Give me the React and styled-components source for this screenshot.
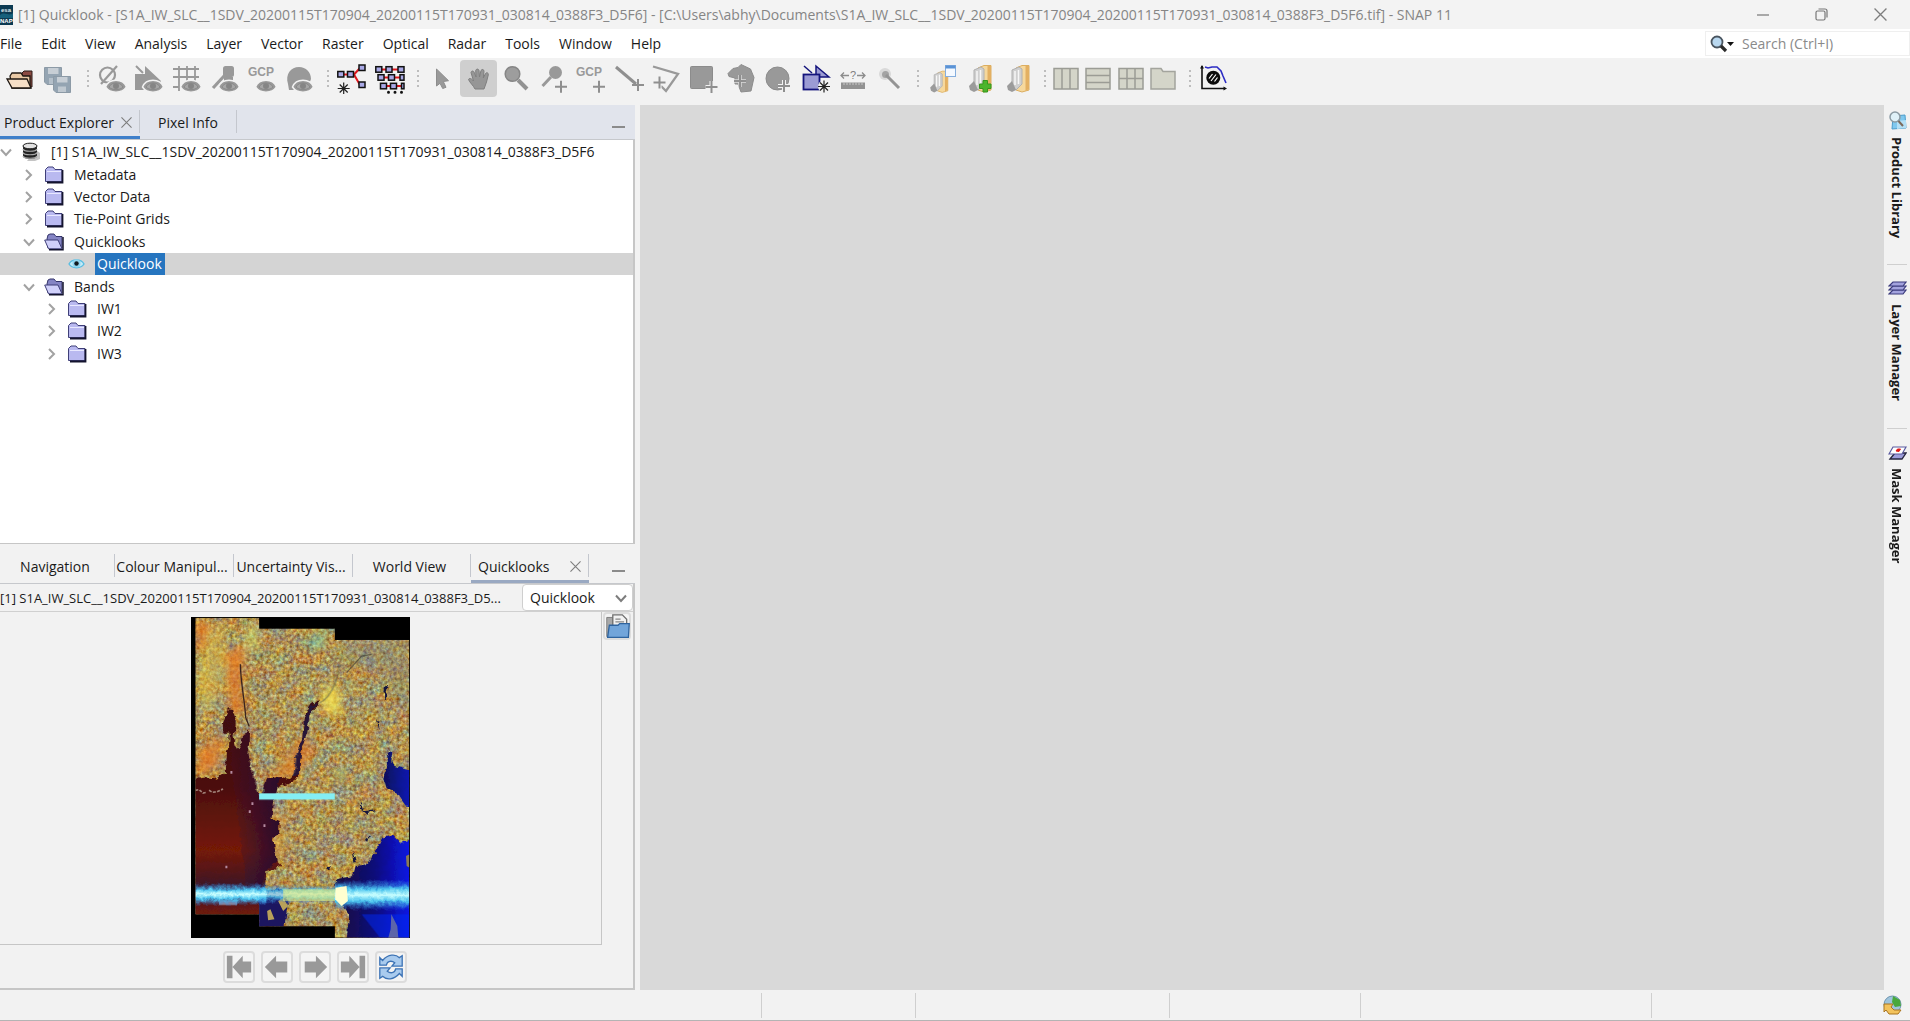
import { useState } from 'react';
import styled, { createGlobalStyle } from 'styled-components';

const GlobalStyle = createGlobalStyle`
  * { box-sizing: border-box; }
  body {
    margin: 0;
    background: #f2f2f2;
    overflow: hidden;
  }
  body, button, input, select {
    font-family: 'Open Sans', 'Noto Sans', sans-serif;
    font-size: 14px;
    color: #1a1a1a;
  }
  button {
    padding: 0;
    border: none;
    background: none;
  }
  svg { display: block; flex: none; }
`;

const Window = styled.div`
  display: flex;
  flex-direction: column;
  height: 100vh;
  border-bottom: 1px solid #b4b4b4;
`;

/* ---- title bar and menu ---- */

const TitleBar = styled.header`
  display: flex;
  align-items: center;
  height: 29px;
  flex: none;
  background: #f3f3f3;
`;

const Title = styled.h1`
  flex: 1;
  margin: 0 0 0 5px;
  font-size: 14px;
  font-weight: 400;
  color: #858585;
  white-space: nowrap;
`;

const WindowButton = styled.button`
  display: grid;
  place-items: center;
  width: 59px;
  height: 29px;
`;

const MenuBar = styled.nav`
  display: flex;
  align-items: center;
  height: 29px;
  flex: none;
  background: #fff;
`;

const MenuItem = styled.button`
  margin-left: ${props => (props.$first ? '0' : '19px')};
  white-space: nowrap;
`;

const SearchBox = styled.label`
  display: flex;
  align-items: center;
  width: 205px;
  height: 25px;
  margin-left: auto;
  padding-left: 4px;
  gap: 8px;
  border: 1px solid #efefef;
`;

const SearchInput = styled.input`
  flex: 1;
  min-width: 0;
  border: none;
  outline: none;
  background: none;
  padding: 0;
  &::placeholder { color: #8a8a8a; opacity: 1; }
`;

/* ---- tool bar ---- */

const ToolBar = styled.div`
  display: flex;
  align-items: flex-start;
  height: 47px;
  flex: none;
  padding: 2px 0 0 1px;
`;

const ToolGroup = styled.div`
  display: flex;
  justify-content: space-between;
  width: ${props => props.$width}px;
`;

const ToolButton = styled.button`
  display: grid;
  place-items: center;
  width: ${props => (props.$narrow ? '32px' : '37px')};
  height: 37px;
  border-radius: 4px;
  background: ${props => (props.$active ? '#cfcfcf' : 'transparent')};
`;

const Grip = styled.span`
  width: 2px;
  height: 19px;
  margin: 10px 4px 0 ${props => props.$lead || 8}px;
  background: repeating-linear-gradient(#bdbdbd 0 2px, transparent 2px 5px);
`;

/* ---- main area ---- */

const Main = styled.main`
  display: flex;
  flex: 1;
  min-height: 0;
`;

const Side = styled.aside`
  display: flex;
  flex-direction: column;
  width: 33.25%;
  min-width: 620px;
`;

const Canvas = styled.section`
  flex: 1;
  margin-left: 5px;
  background: #d9d9d9;
`;

const Panel = styled.section`
  display: flex;
  flex-direction: column;
  flex: ${props => (props.$grow ? '1' : 'none')};
  min-height: 0;
  margin-top: ${props => (props.$grow ? '0' : '5px')};
`;

const TabStrip = styled.div`
  display: flex;
  align-items: flex-start;
  height: 35px;
  flex: none;
  background: ${props => (props.$focused ? '#e1e4ec' : '#f2f2f2')};
  border-bottom: 1px solid #c6c8cc;
`;

const Tab = styled.div`
  display: flex;
  align-items: center;
  justify-content: ${props => (props.$inset ? 'space-between' : 'center')};
  width: ${props => props.$width}px;
  height: 34px;
  padding: ${props => (props.$inset ? `3px 7px 0 ${props.$inset}px` : '3px 5px 0 0')};
  border-bottom: 3px solid ${props => props.$line || 'transparent'};
  background: linear-gradient(#c4c7ce, #c4c7ce) right 5px / 1px 23px no-repeat;
`;

const TabLabel = styled.button`
  white-space: nowrap;
`;

const IconButton = styled.button`
  display: grid;
  place-items: center;
  width: 13px;
  height: 20px;
`;

const Minimise = styled.button`
  width: 13px;
  height: 2px;
  margin: 21px 10px 0 auto;
  background: #8b8b8b;
`;

const TreePane = styled.div`
  flex: 1;
  background: #fff;
  border: 1px solid #c6c6c6;
  border-width: 0 2px 1px 0;
`;

const Tree = styled.ul`
  display: grid;
  grid-auto-rows: 1fr;
  height: 225px;
  margin: 0;
  padding: 1px 0 0;
  list-style: none;
`;

const TreeRow = styled.li`
  display: flex;
  align-items: center;
  padding-left: ${props => props.$depth * 23}px;
  background: ${props => (props.$selected ? '#d4d4d4' : 'transparent')};
  white-space: nowrap;
`;

const Expander = styled.button`
  width: 12px;
  height: 12px;
  margin-right: 9px;
`;

const TreeLabel = styled.span`
  margin-left: 8px;
  padding: 0 3px 0 2px;
  line-height: 22px;
  color: ${props => (props.$selected ? '#fff' : 'inherit')};
  background: ${props => (props.$selected ? '#2675bf' : 'transparent')};
`;

/* ---- quicklooks ---- */

const PanelBody = styled.div`
  border: 1px solid #c6c6c6;
  border-width: 0 2px 2px 0;
`;

const ProductRow = styled.div`
  display: flex;
  align-items: center;
  justify-content: space-between;
  height: 28px;
  border-bottom: 1px solid #d0d0d0;
`;

const ProductName = styled.span`
  font-size: 13px;
  white-space: nowrap;
`;

const SelectWrap = styled.label`
  display: grid;
  align-items: center;
  width: 111px;
  height: 27px;
  flex: none;

  select, svg { grid-area: 1 / 1; }
  svg { justify-self: end; margin-right: 6px; pointer-events: none; }
`;

const Select = styled.select`
  appearance: none;
  width: 100%;
  height: 100%;
  padding: 0 0 0 7px;
  border: 1px solid #cfcfcf;
  border-radius: 4px;
  background: #fff;
`;

const ViewerRow = styled.div`
  display: flex;
`;

const Viewer = styled.div`
  flex: 1;
  display: flex;
  justify-content: center;
  padding: 5px 0 6px;
  border: 1px solid #c6c6c6;
  border-width: 0 1px 1px 0;
`;

const ViewerTools = styled.div`
  width: 31px;
  padding: 0 1px;
`;

const FrameButton = styled.button`
  display: grid;
  place-items: center;
  width: ${props => props.$size}px;
  height: ${props => props.$size}px;
  border: 2px solid #dcdcdc;
  border-radius: 4px;
  background: #f4f4f4;
`;

const Pager = styled.div`
  display: flex;
  justify-content: center;
  gap: 6px;
  padding: 6px 4px 5px 0;
`;

/* ---- right rail and status ---- */

const Rail = styled.aside`
  display: flex;
  flex-direction: column;
  width: 26px;
  padding: 6px 3px 0;
`;

const RailTab = styled.button`
  display: flex;
  align-items: center;
  gap: 7px;
  height: ${props => props.$length}px;
  writing-mode: vertical-rl;
  font-size: 13px;
  font-weight: 700;
  white-space: nowrap;
`;

const RailLine = styled.hr`
  width: 20px;
  margin: 0 0 16px;
  border: none;
  border-top: 1px solid #cfcfcf;
`;

const StatusBar = styled.footer`
  display: flex;
  align-items: center;
  justify-content: flex-end;
  height: 30px;
  flex: none;
  padding-right: 8px;
`;

const StatusCell = styled.div`
  width: ${props => props.$width}px;
  height: 25px;
  border-left: 1px solid #cfcfcf;
`;

/* ---- drawings ---- */

const G = '#999';

const Svg = ({ size = 30, children, ...rest }) => (
  <svg width={size} height={size} viewBox="0 0 30 30" fill="none" aria-hidden="true" {...rest}>
    {children}
  </svg>
);

const Eye = ({ x = 19, y = 22 }) => (
  <g transform={`translate(${x} ${y})`}>
    <path d="M-10.5 1C-7-8 7-8 10.5 1C6 8-6 8-10.5 1Z" fill={G} stroke="#f2f2f2" strokeWidth="1.5" />
    <path d="M-7 1C-4-4.5 4-4.5 7 1C4 4.5-4 4.5-7 1Z" fill="#a6a6a6" stroke="#8a8a8a" />
    <circle cx="0" cy="0" r="3" fill="#858585" />
  </g>
);

const Plus = ({ x, y }) => (
  <g transform={`translate(${x} ${y})`}>
    <path d="M-6 0H6M0-6V6" stroke="#f2f2f2" strokeWidth="4" />
    <path d="M-6 0H6M0-6V6" stroke="#8f8f8f" strokeWidth="2" />
  </g>
);

const Spark = ({ x, y }) => (
  <path
    transform={`translate(${x} ${y})`}
    d="M0-6V6M-6 0H6M-4-4L4 4M4-4L-4 4"
    stroke="#222"
    strokeWidth="1.2"
  />
);

const GcpText = () => (
  <text x="0" y="12" fontFamily="Liberation Sans, sans-serif" fontSize="12" fontWeight="700" fill={G}>
    GCP
  </text>
);

const Box = ({ x, y, w = 6 }) => (
  <rect x={x} y={y} width={w} height="5.5" fill="#a9a9e6" stroke="#111" strokeWidth="1.5" />
);

const BookFolder = () => (
  <>
    <path d="M13 4L19 1.5H26V26L19 28L13 26Z" fill="#f6d89c" stroke="#dcae60" />
    <path d="M22.5 2V27L26 25V2Z" fill="#e3b062" />
    <path d="M9 6L16 3L19 5V20L13 26L9 23Z" fill="#cfcfcf" stroke="#b0b0b0" />
    <path d="M12 7V21M15.5 6V20" stroke="#f7f7f7" strokeWidth="1.5" />
    <path d="M4 22L9 17L13 26L9 28L5 26Z" fill="#9b9b9b" />
  </>
);

const toolIcons = {
  open: (
    <Svg>
      <path d="M17 9L19 7H27V23H17Z" fill="#8b4a42" stroke="#2b1a17" />
      <path d="M5 12L7 9H16L18 12H25V24H7Z" fill="#e9c9a5" stroke="#1e1712" strokeWidth="1.3" />
      <path d="M2 15H22L26 24H7Z" fill="#f6dfc6" stroke="#1e1712" strokeWidth="1.3" />
    </Svg>
  ),
  save: (
    <Svg>
      <path d="M1.5 3.5H18.5V20.5H4L1.5 18Z" fill="#94a4b2" stroke="#8c9aa6" />
      <path d="M5 4H15.5V10H5Z" fill="#c7ced5" />
      <path d="M6 14H14V20H6Z" fill="#b4bfc9" />
      <path d="M10.5 12.5H27.5V28.5H13L10.5 26Z" fill="#94a4b2" stroke="#8c9aa6" />
      <path d="M14 13H24.5V18.5H14Z" fill="#c7ced5" />
      <path d="M15 22.5H23V28H15Z" fill="#bfc8d0" />
    </Svg>
  ),
  noData: (
    <Svg>
      <circle cx="10.5" cy="11" r="7.5" stroke={G} strokeWidth="2.2" />
      <path d="M4 20L20 2" stroke={G} strokeWidth="2.2" />
      <Eye />
    </Svg>
  ),
  shapesEye: (
    <Svg>
      <path d="M1 10H11V2L27 17L22 26H1Z" fill={G} />
      <path d="M2 2L9 9" stroke={G} strokeWidth="2" />
      <Eye />
    </Svg>
  ),
  gridEye: (
    <Svg>
      <path d="M7 2V27M15 2V27M23 2V27M1 5H27M1 13H27M1 23H27" stroke={G} strokeWidth="1.8" />
      <Eye />
    </Svg>
  ),
  pinEye: (
    <Svg>
      <rect x="13" y="2" width="11" height="11" rx="2.5" fill={G} />
      <path d="M15 11L3 24" stroke={G} strokeWidth="3.2" />
      <path d="M14 13H23V20H14Z" fill={G} />
      <Eye />
    </Svg>
  ),
  gcpEye: (
    <Svg>
      <GcpText />
      <Eye x={18} />
    </Svg>
  ),
  maskEye: (
    <Svg>
      <path d="M3 20C0 10 6 3 14 3C21 3 26 8 26 15L22 26H4Z" fill={G} />
      <Eye x={18} />
    </Svg>
  ),
  graph: (
    <Svg>
      <path d="M6 10.5H11M17 10.5L23 4M17 10.5L23 21" stroke="#e0161c" strokeWidth="2" />
      <Box x={0.8} y={7.5} />
      <Box x={10.5} y={7.5} />
      <Box x={22} y={1} />
      <Box x={22} y={18} />
      <Spark x={6.7} y={24.5} />
    </Svg>
  ),
  batch: (
    <Svg>
      <path d="M5 5.5H24M6 13.5H27M8 22H29" stroke="#e0161c" strokeWidth="2.2" />
      <Box x={0.8} y={2.7} />
      <Box x={11} y={2.7} />
      <Box x={23} y={2.7} />
      <Box x={3} y={10.7} />
      <Box x={13.5} y={10.7} />
      <Box x={25} y={10.7} w={4} />
      <Box x={5.5} y={19.3} />
      <Box x={15.5} y={19.3} />
      <Box x={26.5} y={19.3} w={2.5} />
      <path d="M13.5 28.3h0M20 28.3h0M26.5 28.3h0" stroke="#111" strokeWidth="3" strokeLinecap="round" />
    </Svg>
  ),
  pointer: (
    <Svg>
      <path d="M9.5 5V22L13 19.3L15.7 24.5L19 23.3L16.3 17.5L21.5 16.7Z" fill={G} stroke="#8d8d8d" />
    </Svg>
  ),
  hand: (
    <Svg>
      <path
        d="M11 25C9 21 6 19 4.5 15.5C5.5 13.5 7.5 14.5 9.5 17L7 8.5C7.5 6.5 9.5 6.5 10.3 8.5L12 13L11.7 6.5C12.5 4.5 14.5 4.7 15 6.5L15.5 13L17 6.5C18 4.8 20 5.3 20 7.3L19.3 14L21.5 9.5C22.5 8 24.7 8.8 24.3 10.8L22.5 18L20 25Z"
        fill="#969696"
        stroke="#7f7f7f"
      />
    </Svg>
  ),
  zoom: (
    <Svg>
      <circle cx="11.5" cy="10" r="7.3" fill="#9d9d9d" stroke="#868686" strokeWidth="1.5" />
      <path d="M17 16L26 25" stroke="#929292" strokeWidth="4" />
    </Svg>
  ),
  pinAdd: (
    <Svg>
      <circle cx="16.5" cy="8.5" r="6.5" fill={G} />
      <path d="M12 13L3.5 22" stroke={G} strokeWidth="3" />
      <Plus x={22} y={22.7} />
    </Svg>
  ),
  gcpAdd: (
    <Svg>
      <GcpText />
      <Plus x={23} y={22.7} />
    </Svg>
  ),
  lineAdd: (
    <Svg>
      <Plus x={24} y={21} />
      <path d="M2 3L22 20" stroke="#8f8f8f" strokeWidth="3" />
    </Svg>
  ),
  polylineAdd: (
    <Svg>
      <path d="M2 2.5L27 10L15 27L10 22" stroke={G} strokeWidth="2.3" />
      <Plus x={8.5} y={18.5} />
    </Svg>
  ),
  rectAdd: (
    <Svg>
      <rect x="2.5" y="2.5" width="22" height="22" rx="1" fill={G} stroke="#8c8c8c" />
      <Plus x={23.5} y={23} />
    </Svg>
  ),
  polygonAdd: (
    <Svg>
      <path d="M2 9.5L7 4.5L12 3.5L15 .5L24.5 5L28 13.5L25 27L15 28L12 20H9V14L3 12.5Z" fill={G} stroke="#8c8c8c" />
      <path d="M8 17H20M14 11V23" stroke="#dcdcdc" strokeWidth="3.4" />
      <path d="M8 17H20M14 11V23" stroke="#8f8f8f" strokeWidth="2" />
    </Svg>
  ),
  ellipseAdd: (
    <Svg>
      <circle cx="14.5" cy="14.5" r="11.5" fill={G} stroke="#8c8c8c" />
      <Plus x={21} y={22} />
    </Svg>
  ),
  geometry: (
    <Svg>
      <path d="M15 2V13H28Z" fill="#9b9bd4" stroke="#14147c" strokeWidth="1.5" />
      <rect x="2.5" y="10.5" width="16" height="15" fill="#9b9bd4" stroke="#14147c" strokeWidth="1.8" />
      <path d="M3 2L11 9" stroke="#14147c" strokeWidth="1.5" />
      <circle cx="23" cy="22.5" r="6" fill="#f2f2f2" />
      <Spark x={23} y={22.5} />
    </Svg>
  ),
  ruler: (
    <Svg>
      <path d="M3 11.5H11M6 8.5L3 11.5L6 14.5M19 11.5H27M24 8.5L27 11.5L24 14.5" stroke="#8c8c8c" strokeWidth="1.3" />
      <text x="12" y="15" fontFamily="Liberation Sans, sans-serif" fontSize="11" fill="#808080">?</text>
      <rect x="3" y="18.5" width="24" height="6.5" fill="#929292" />
      <path d="M6 18V21M9 18V21M12 18V21M15 18V21M18 18V21M21 18V21M24 18V21" stroke="#c8c8c8" />
    </Svg>
  ),
  wand: (
    <Svg>
      <circle cx="10" cy="10" r="6" fill="#d9d9d9" />
      <circle cx="10.5" cy="10.5" r="3.5" fill="#a3a3a3" />
      <path d="M11 11L24 24" stroke="#949494" strokeWidth="3" />
    </Svg>
  ),
  sessionOpen: (
    <Svg>
      <g transform="translate(0 6) scale(.8)">
        <BookFolder />
      </g>
      <rect x="18.5" y="1.5" width="10" height="11" fill="#f4f9ff" stroke="#85aedd" />
      <path d="M18.5 3H28.5" stroke="#5a93d6" strokeWidth="3" />
    </Svg>
  ),
  sessionAdd: (
    <Svg>
      <BookFolder />
      <path d="M18 16.5H22.5V20H26V24.5H22.5V28H18V24.5H14.5V20H18Z" fill="#4cb52c" stroke="#37961c" />
    </Svg>
  ),
  session: (
    <Svg>
      <BookFolder />
    </Svg>
  ),
  columns: (
    <Svg>
      <path d="M3 4.5H27V25H3Z M11 4.5V25M19 4.5V25" fill="#d4d5c9" stroke="#9b9c95" strokeWidth="1.5" />
    </Svg>
  ),
  rows: (
    <Svg>
      <path d="M3 4.5H27V25H3Z M3 11.5H27M3 18.5H27" fill="#d4d5c9" stroke="#9b9c95" strokeWidth="1.5" />
    </Svg>
  ),
  tiles: (
    <Svg>
      <path d="M3 4.5H27V25H3Z M11 4.5V25M19 4.5V25M3 14.5H27" fill="#d4d5c9" stroke="#9b9c95" strokeWidth="1.5" />
    </Svg>
  ),
  tabbed: (
    <Svg>
      <path d="M3 4.5H13L15 7.5H27V25H3Z" fill="#d4d5c9" stroke="#a3a49d" strokeWidth="1.5" />
    </Svg>
  ),
  plot: (
    <Svg>
      <path d="M3 2V24.5H26" stroke="#111" strokeWidth="1.6" />
      <path d="M1 4.5L3 1L5 4.5ZM24.5 22.5L28 24.5L24.5 26.5Z" fill="#111" />
      <path d="M6 3L9 4L13 3L18 3L22 7L24 12L27 19" stroke="#2c2cc4" strokeWidth="1.6" />
      <circle cx="14.3" cy="13.7" r="7" fill="#0b0b0b" />
      <path d="M10 14.5L13.5 10M12 17L17 10.5M15.5 17.5L18.5 13.5" stroke="#fff" strokeWidth="1.2" />
    </Svg>
  ),
};

const Chevron = ({ open, color = '#a2a2a2' }) => (
  <svg width="12" height="12" viewBox="0 0 12 12" fill="none" aria-hidden="true">
    <path d={open ? 'M1 3.5L6 9L11 3.5' : 'M3 1L8 6L3 11'} stroke={color} strokeWidth="2" />
  </svg>
);

const Cross = ({ size = 11 }) => (
  <svg width={size} height={size} viewBox="0 0 12 12" aria-hidden="true">
    <path d="M.5 .5L11.5 11.5M11.5 .5L.5 11.5" stroke="#7d7d7d" strokeWidth="1.2" />
  </svg>
);

const treeIcons = {
  product: (
    <svg width="20" height="20" viewBox="0 0 20 20" aria-hidden="true">
      <path d="M15 8L19 11V17L14 19H6Z" fill="#c4c4c4" />
      <path d="M2 4V14C2 18 16 18 16 14V4Z" fill="#222" />
      <path d="M2 7C3 10 15 10 16 7M2 10.5C3 13.5 15 13.5 16 10.5M2 14C3 17 15 17 16 14" fill="none" stroke="#a9a9a9" strokeWidth="1.2" />
      <ellipse cx="9" cy="4" rx="7" ry="2.8" fill="#e2e2e2" stroke="#222" />
    </svg>
  ),
  folder: (
    <svg width="20" height="18" viewBox="0 0 20 18" aria-hidden="true">
      <path d="M1.5 3.5L4 1H9L11 3.5H18V15.5H1.5Z" fill="#b9b9f0" stroke="#3f3f78" />
      <path d="M3 5.5H17" stroke="#e8e8ff" />
      <path d="M18.5 4V16.5H3" fill="none" stroke="#14142e" strokeWidth="1.8" />
    </svg>
  ),
  folderOpen: (
    <svg width="20" height="18" viewBox="0 0 20 18" aria-hidden="true">
      <path d="M3 6L4 2L6 1H10L12 3.5H18V15H4Z" fill="#8585c4" stroke="#34346b" />
      <path d="M.7 7H14L18 15.8H4.5Z" fill="#d0d0fa" stroke="#3f3f78" />
      <path d="M19 4V16.8H5" fill="none" stroke="#14142e" strokeWidth="1.5" />
    </svg>
  ),
  eye: (
    <svg width="20" height="18" viewBox="0 0 20 18" aria-hidden="true">
      <path d="M2 9C5 3.5 14 3.5 17 9C14 14 5 14 2 9Z" fill="#c4ecf8" stroke="#58bde2" strokeWidth="1.4" />
      <circle cx="9.5" cy="8.5" r="4" fill="#8fd5ef" />
      <circle cx="9.5" cy="8.5" r="2.2" fill="#10181d" />
    </svg>
  ),
};

const pagerIcons = {
  first: <path d="M2 3V27H8V3ZM8 15L19 3V9H28V21H19V27Z" fill={G} />,
  previous: <path d="M2 15L14 3V9H26V21H14V27Z" fill={G} />,
  next: <path d="M28 15L16 3V9H4V21H16V27Z" fill={G} />,
  last: <path d="M28 3V27H22V3ZM22 15L11 3V9H2V21H11V27Z" fill={G} />,
  refresh: (
    <>
      <path d="M3 13V5L6 8C12 1 20 1 24 5L27 3V14H16L19 10.5C16 8 11 8 10 13Z" fill="#a9cbee" stroke="#3c73b5" strokeWidth="1.4" />
      <path d="M27 17V25L24 22C18 29 10 29 6 25L3 27V16H14L11 19.5C14 22 19 22 20 17Z" fill="#a9cbee" stroke="#3c73b5" strokeWidth="1.4" />
    </>
  ),
};

const QuicklookImage = () => (
  <svg width="219" height="321" viewBox="34 38 656 963" preserveAspectRatio="none" role="img" aria-label="Quicklook">
    <defs>
      <filter id="land" x="0" y="0" width="1" height="1" colorInterpolationFilters="sRGB">
        <feTurbulence type="fractalNoise" baseFrequency=".1" numOctaves="3" seed="7" />
        <feColorMatrix values=".3 .6 0 0 .23  0 .9 .1 0 .08  -.2 .6 .5 0 -.1  0 0 0 0 1" />
      </filter>
      <filter id="drift" x="0" y="0" width="1" height="1" colorInterpolationFilters="sRGB">
        <feTurbulence type="fractalNoise" baseFrequency=".022" numOctaves="4" seed="11" />
        <feColorMatrix values="1.6 0 0 0 -.15  0 .8 0 0 .17  -2.2 0 .6 0 1.15  0 0 0 0 1" />
      </filter>
      <filter id="soft" x="-.3" y="-.3" width="1.6" height="1.6"><feGaussianBlur stdDeviation="13" /></filter>
      <filter id="edge"><feGaussianBlur stdDeviation="1.5" /></filter>
      <filter id="coast" x="-.1" y="-.1" width="1.2" height="1.2">
        <feTurbulence type="fractalNoise" baseFrequency=".06" numOctaves="2" seed="3" />
        <feDisplacementMap in="SourceGraphic" scale="16" xChannelSelector="R" yChannelSelector="G" />
      </filter>
      <filter id="streak" x="0" y="-.3" width="1" height="1.6">
        <feTurbulence type="fractalNoise" baseFrequency=".08" numOctaves="2" seed="5" />
        <feDisplacementMap in="SourceGraphic" scale="16" yChannelSelector="G" />
        <feGaussianBlur stdDeviation="2" />
      </filter>
      <clipPath id="swaths">
        <path d="M47 40H238V73H465V107H688V1000H465V966H238V930H47Z" />
      </clipPath>
      <linearGradient id="redSea" x1="0" y1="0" x2="0" y2="1">
        <stop offset="0" stopColor="#3c0a12" />
        <stop offset=".4" stopColor="#4c0f10" />
        <stop offset=".68" stopColor="#741a06" />
        <stop offset=".84" stopColor="#3e1626" />
        <stop offset="1" stopColor="#7a1b08" />
      </linearGradient>
      <linearGradient id="plum">
        <stop offset="0" stopColor="#2c1040" stopOpacity="0" />
        <stop offset="1" stopColor="#2a0a2c" />
      </linearGradient>
      <linearGradient id="blueSea">
        <stop offset="0" stopColor="#1a0a3a" />
        <stop offset=".5" stopColor="#0c0a7a" />
        <stop offset="1" stopColor="#0a18f0" />
      </linearGradient>
      <linearGradient id="bay">
        <stop offset="0" stopColor="#0c1058" />
        <stop offset="1" stopColor="#0a18c0" />
      </linearGradient>
      <linearGradient id="beam" x1="0" y1="0" x2="0" y2="1">
        <stop offset="0" stopColor="#2a6fe0" stopOpacity="0" />
        <stop offset=".3" stopColor="#4cc4ee" />
        <stop offset=".5" stopColor="#c9ffff" />
        <stop offset=".7" stopColor="#4cc4ee" />
        <stop offset="1" stopColor="#2a6fe0" stopOpacity="0" />
      </linearGradient>
    </defs>
    <path d="M34 38H690V1001H34Z" fill="#000" />
    <g clipPath="url(#swaths)">
      <rect x="34" y="38" width="656" height="963" filter="url(#land)" />
      <rect x="34" y="38" width="656" height="963" filter="url(#drift)" opacity=".22" />
      <g filter="url(#soft)">
        <path d="M140 150L195 110L185 250L190 340L150 310ZM47 60L90 50L75 120L50 150ZM60 440L130 380L120 490L50 510Z" fill="#f07818" opacity=".7" />
        <path d="M95 60L135 50L140 200L110 300L60 330L50 210Z" fill="#e8c848" opacity=".45" />
        <path d="M360 400L395 390L385 480L340 520L270 515Z" fill="#e87a22" opacity=".6" />
        <path d="M420 290L440 240L475 250L485 330L440 330Z" fill="#ffe84c" opacity=".75" />
        <path d="M200 70L235 60L235 120L200 160L205 200Z" fill="#cfe87a" opacity=".6" />
        <path d="M400 80L440 85L435 130L400 140ZM490 220L530 240L510 280ZM470 490L500 490L495 540L470 530Z" fill="#86d8a8" opacity=".5" />
        <path d="M470 110H689V330L600 200L480 180Z" fill="#6f7f88" opacity=".25" />
        <path d="M240 640L320 610L310 780L270 790Z" fill="#e0953c" opacity=".4" />
      </g>
      <g filter="url(#coast)">
        <path d="M30 530L70 520L105 525L138 505L142 440L148 425L150 385H130V355L148 315L160 318L168 350L166 385L158 388L165 425L178 435L190 400L208 375L206 450L214 500L228 550L240 575L252 570V550L262 522L300 518L330 525L346 508L354 440L368 400L372 340L395 300L420 285L412 305L388 330L382 385L366 430L356 510L340 535L292 548L280 580L275 640L300 650L298 690L280 700L290 770L305 785L260 800L255 850L238 860V950H30Z" fill="url(#redSea)" />
        <path d="M150 440L205 380L210 470L240 575L262 522L300 520L290 560L278 600L275 640L298 650L296 690L280 700L290 770L258 800L245 850H200Z" fill="url(#plum)" />
        <path d="M340 515L350 450L368 400L374 340L395 305L415 292L388 330L382 385L366 430L356 510Z" fill="#1e1a4a" opacity=".7" />
        <path d="M238 855L310 855L325 890L312 980H238Z" fill="#1c1660" />
        <path d="M620 445L637 440L634 470L640 485L700 500V600L680 605L655 570L620 555L610 520L625 480Z" fill="url(#bay)" />
        <path d="M528 785L560 780L590 740L610 700L635 690L660 715L700 708V1010H500L508 930L480 890L470 850L468 825L520 815Z" fill="url(#blueSea)" />
        <path d="M540 590L552 620L590 618L560 628L540 612ZM615 240L622 250L618 285L612 280ZM592 345L598 350L596 375ZM515 735L530 780L520 770ZM555 705L570 695L565 712ZM440 785H452V795H440Z" fill="#15143e" />
      </g>
      <path d="M182 180C182 230 195 290 198 340L208 365" fill="none" stroke="#3a2420" strokeWidth="4" />
      <path d="M420 295C450 280 470 240 480 180" fill="none" stroke="#5d6350" strokeWidth="5" opacity=".5" />
      <path d="M500 205L545 155L575 150" fill="none" stroke="#4a4438" strokeWidth="4" opacity=".7" />
      <path d="M632 975L634 930L652 965L655 1000H625ZM262 920L272 915L284 945L265 948ZM295 890L310 880L325 905L310 920Z" fill="#b8a15a" />
      <path d="M678 755L689 750V790L680 785Z" fill="#8c7c52" />
      <path d="M47 558L58 556L70 566L82 564M88 558L98 564L112 562L130 554" fill="none" stroke="#a08078" strokeWidth="5" strokeDasharray="9 4" />
      <path d="M155 500V508M218 594V602M210 618V626M254 660V668M140 784V792" stroke="#b48ba0" strokeWidth="6" />
      <g filter="url(#edge)">
        <path d="M238 567H465V586H238Z" fill="#84eef4" />
        <path d="M545 930H689V1000H600Z" fill="#0a2cf8" opacity=".5" />
        <path d="M118 888H172V902H118Z" fill="#8f8698" />
      </g>
      <path d="M38 836H260V904H38Z" fill="url(#beam)" filter="url(#streak)" />
      <path d="M238 842H480V896H238Z" fill="url(#beam)" opacity=".8" filter="url(#streak)" />
      <path d="M310 855H470V890H310Z" fill="#e6f07c" opacity=".55" filter="url(#edge)" />
      <path d="M465 826H700V918H465Z" fill="url(#beam)" filter="url(#streak)" />
      <path d="M467 850L500 845L504 890L485 905L466 885Z" fill="#ffffd0" filter="url(#edge)" />
    </g>
  </svg>
);

/* ---- data ---- */

const PRODUCT = 'S1A_IW_SLC__1SDV_20200115T170904_20200115T170931_030814_0388F3_D5F6';

const menus = ['File', 'Edit', 'View', 'Analysis', 'Layer', 'Vector', 'Raster', 'Optical', 'Radar', 'Tools', 'Window', 'Help'];

const toolGroups = [
  { width: 75, tools: ['open', 'save'] },
  { width: 226, lead: 11, tools: ['noData', 'shapesEye', 'gridEye', 'pinEye', 'gcpEye', 'maskEye'] },
  { width: 75, tools: ['graph', 'batch'] },
  { width: 486, lead: 9, tools: ['pointer', 'hand', 'zoom', 'pinAdd', 'gcpAdd', 'lineAdd', 'polylineAdd', 'rectAdd', 'polygonAdd', 'ellipseAdd', 'geometry', 'ruler', 'wand'] },
  { width: 113, tools: ['sessionOpen', 'sessionAdd', 'session'] },
  { width: 129, narrow: true, tools: ['columns', 'rows', 'tiles', 'tabbed'] },
  { width: 37, lead: 10, tools: ['plot'] },
];

const treeRows = [
  { label: `[1] ${PRODUCT}`, icon: 'product', depth: 0, open: true },
  { label: 'Metadata', icon: 'folder', depth: 1 },
  { label: 'Vector Data', icon: 'folder', depth: 1 },
  { label: 'Tie-Point Grids', icon: 'folder', depth: 1 },
  { label: 'Quicklooks', icon: 'folderOpen', depth: 1, open: true },
  { label: 'Quicklook', icon: 'eye', depth: 2, leaf: true },
  { label: 'Bands', icon: 'folderOpen', depth: 1, open: true },
  { label: 'IW1', icon: 'folder', depth: 2 },
  { label: 'IW2', icon: 'folder', depth: 2 },
  { label: 'IW3', icon: 'folder', depth: 2 },
];

const lowerTabs = [
  { label: 'Navigation', width: 115 },
  { label: 'Colour Manipul...', width: 119 },
  { label: 'Uncertainty Vis...', width: 119 },
  { label: 'World View', width: 118 },
];

const Tools = () => (
  <ToolBar role="toolbar">
    {toolGroups.map((group, index) => [
      index > 0 && <Grip key={`grip${index}`} $lead={group.lead} />,
      <ToolGroup key={index} $width={group.width}>
        {group.tools.map(name => (
          <ToolButton key={name} aria-label={name} $narrow={group.narrow} $active={name === 'hand'}>
            {toolIcons[name]}
          </ToolButton>
        ))}
      </ToolGroup>,
    ])}
  </ToolBar>
);

const Explorer = () => {
  const [selected, setSelected] = useState('Quicklook');
  return (
    <Panel $grow>
      <TabStrip $focused>
        <Tab $width={140} $line="#3f7fca" $inset={4}>
          <TabLabel>Product Explorer</TabLabel>
          <IconButton aria-label="Close Product Explorer"><Cross /></IconButton>
        </Tab>
        <Tab $width={97} $inset={18}>
          <TabLabel>Pixel Info</TabLabel>
        </Tab>
        <Minimise aria-label="Minimise" />
      </TabStrip>
      <TreePane>
        <Tree>
          {treeRows.map(row => (
            <TreeRow
              key={row.label}
              $depth={row.depth}
              $selected={row.label === selected}
              onClick={() => setSelected(row.label)}
            >
              <Expander aria-label={`Toggle ${row.label}`}>
                {!row.leaf && <Chevron open={row.open} />}
              </Expander>
              {treeIcons[row.icon]}
              <TreeLabel $selected={row.label === selected}>{row.label}</TreeLabel>
            </TreeRow>
          ))}
        </Tree>
      </TreePane>
    </Panel>
  );
};

const Quicklooks = () => (
  <Panel>
    <TabStrip>
      {lowerTabs.map(tab => (
        <Tab key={tab.label} $width={tab.width}>
          <TabLabel>{tab.label}</TabLabel>
        </Tab>
      ))}
      <Tab $width={118} $line="#9aa9c2" $inset={7}>
        <TabLabel>Quicklooks</TabLabel>
        <IconButton aria-label="Close Quicklooks"><Cross /></IconButton>
      </Tab>
      <Minimise aria-label="Minimise" />
    </TabStrip>
    <PanelBody>
      <ProductRow>
        <ProductName>[1] S1A_IW_SLC__1SDV_20200115T170904_20200115T170931_030814_0388F3_D5...</ProductName>
        <SelectWrap>
          <Select aria-label="Quicklook" defaultValue="Quicklook">
            <option>Quicklook</option>
          </Select>
          <Chevron open color="#7d7d7d" />
        </SelectWrap>
      </ProductRow>
      <ViewerRow>
        <Viewer>
          <QuicklookImage />
        </Viewer>
        <ViewerTools>
          <FrameButton $size={28} aria-label="Open">
            <Svg size={26}>
              <path d="M2 4H9V26H2Z" fill="#a8a8a8" stroke="#777" />
              <path d="M9 1H20L25 6V20H9Z" fill="#f2f2f2" stroke="#6e6e6e" strokeWidth="1.5" />
              <path d="M12 6H18M12 9H22" stroke="#888" strokeWidth="1.5" />
              <path d="M5 13H15L17 11H28L27 27H3Z" fill="#72a5da" stroke="#2f649f" strokeWidth="1.5" />
            </Svg>
          </FrameButton>
        </ViewerTools>
      </ViewerRow>
      <Pager>
        {Object.entries(pagerIcons).map(([name, icon]) => (
          <FrameButton key={name} $size={32} aria-label={name}>
            <Svg size={28}>{icon}</Svg>
          </FrameButton>
        ))}
      </Pager>
    </PanelBody>
  </Panel>
);

const SideRail = () => (
  <Rail>
    <RailTab $length={153}>
      <svg width="19" height="19" viewBox="0 0 19 19" aria-hidden="true">
        <path d="M5 5L17 4L18 17L4 18Z" fill="#7fc8ef" stroke="#4d9dcb" />
        <path d="M9 10L18 9V17L9 18Z" fill="#b4e0f6" />
        <circle cx="7" cy="6" r="5" fill="#dff1f8" stroke="#8b9ba3" strokeWidth="1.5" />
        <path d="M10.5 10L15 15" stroke="#7d6a5c" strokeWidth="2" />
      </svg>
      Product Library
    </RailTab>
    <RailLine />
    <RailTab $length={147}>
      <svg width="19" height="16" viewBox="0 0 19 16" aria-hidden="true">
        {[10, 6, 2].map(y => (
          <path key={y} d={`M1 ${y + 3}L5 ${y - 1}H18L15 ${y + 3}Z`} fill="#a3a3de" stroke="#3a3a7c" strokeWidth="1.2" />
        ))}
      </svg>
      Layer Manager
    </RailTab>
    <RailLine />
    <RailTab $length={153}>
      <svg width="19" height="16" viewBox="0 0 19 16" aria-hidden="true">
        <path d="M2 14L7 8H18L14 14Z" fill="#9d9ddb" stroke="#25253f" strokeWidth="1.3" />
        <path d="M1 9L5 2H18L14 9Z" fill="#fff" stroke="#5a5aa0" strokeWidth="1.2" />
        <path d="M8 6L9.5 4H12.5L11 6.5Z" fill="#e01a1a" stroke="#e01a1a" />
      </svg>
      Mask Manager
    </RailTab>
  </Rail>
);

export default function App() {
  return (
    <Window>
      <GlobalStyle />
      <TitleBar>
        <svg width="13" height="20" viewBox="0 0 13 20" aria-hidden="true">
          <path d="M0 0H13V20H0Z" fill="#0c3a52" />
          <path d="M0 10C5 6 9 12 13 8V13H0Z" fill="#16607c" />
          <text x="1" y="7" fontFamily="Liberation Sans, sans-serif" fontSize="6" fontWeight="700" fill="#dfe9ee">esa</text>
          <text x="0" y="18" fontFamily="Liberation Sans, sans-serif" fontSize="6" fontWeight="700" fill="#fff">NAP</text>
        </svg>
        <Title>
          [1] Quicklook - [{PRODUCT}] - [C:\Users\abhy\Documents\{PRODUCT}.tif] - SNAP 11
        </Title>
        <WindowButton aria-label="Minimise">
          <svg width="12" height="2"><path d="M0 1H12" stroke="#777" strokeWidth="1.2" /></svg>
        </WindowButton>
        <WindowButton aria-label="Restore">
          <svg width="13" height="13" viewBox="0 0 13 13" fill="none" stroke="#777" strokeWidth="1.2">
            <rect x="1" y="3" width="9" height="9" rx="1.5" />
            <path d="M3.5 1H10C11.5 1 12 2 12 3V9.5" />
          </svg>
        </WindowButton>
        <WindowButton aria-label="Close"><Cross size={13} /></WindowButton>
      </TitleBar>
      <MenuBar>
        {menus.map((menu, index) => (
          <MenuItem key={menu} $first={index === 0}>{menu}</MenuItem>
        ))}
        <SearchBox>
          <svg width="24" height="18" viewBox="0 0 24 18" aria-hidden="true">
            <circle cx="7" cy="7" r="5.5" fill="#b9d8f0" stroke="#4a5560" strokeWidth="1.8" />
            <path d="M11 11L16 16" stroke="#2b2b2b" strokeWidth="3.2" />
            <path d="M17 7H24L20.5 11Z" fill="#111" />
          </svg>
          <SearchInput type="text" aria-label="Search" placeholder="Search (Ctrl+I)" />
        </SearchBox>
      </MenuBar>
      <Tools />
      <Main>
        <Side>
          <Explorer />
          <Quicklooks />
        </Side>
        <Canvas />
        <SideRail />
      </Main>
      <StatusBar>
        <StatusCell $width={154} />
        <StatusCell $width={254} />
        <StatusCell $width={191} />
        <StatusCell $width={291} />
        <StatusCell $width={232} />
        <svg width="19" height="20" viewBox="0 0 19 20" aria-hidden="true">
          <circle cx="9.5" cy="9.5" r="8.5" fill="#9fc4dc" stroke="#6b93ad" />
          <path d="M10 1L17 5L18 11L12 12L9 7Z" fill="#49a83c" />
          <path d="M1 9H10L8 12L11 15H18L15 19H6L3 15L1 17Z" fill="#f3c35c" stroke="#a9741f" />
        </svg>
      </StatusBar>
    </Window>
  );
}
